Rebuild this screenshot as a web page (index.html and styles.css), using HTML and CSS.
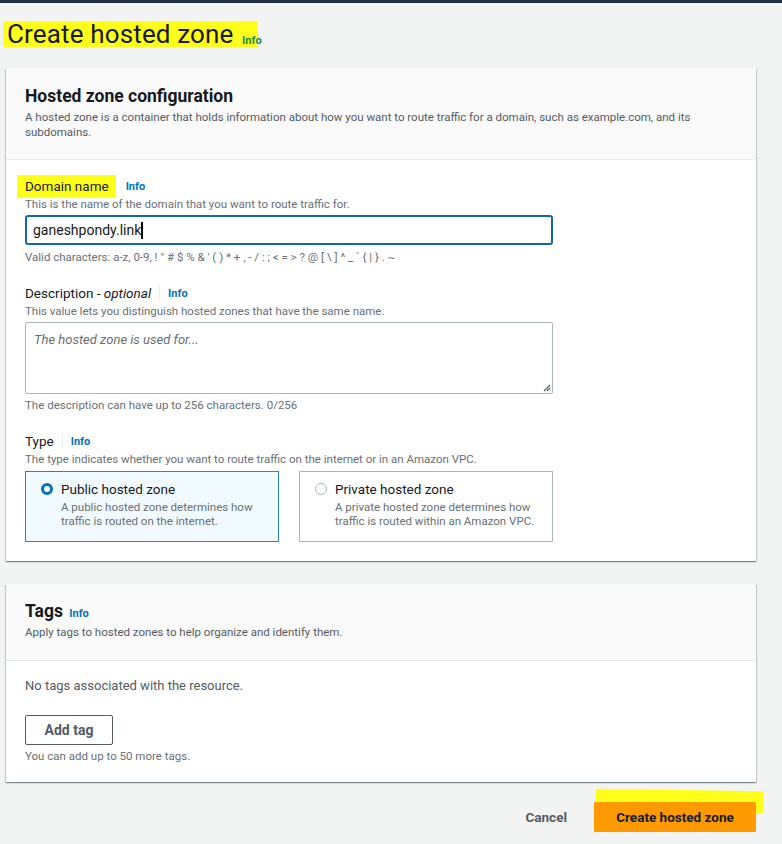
FILE: index.html
```html
<!DOCTYPE html>
<html lang="en">
<head>
<meta charset="utf-8">
<title>Create hosted zone</title>
<link rel="stylesheet" href="styles.css">
</head>
<body>
<div class="topbar"></div>
<main class="page">
  <h1 class="title"><span class="hl">Create hosted zone <a class="info info-title">Info</a></span></h1>

  <section class="card">
    <header class="card-head">
      <h2>Hosted zone configuration</h2>
      <p class="head-desc">A hosted zone is a container that holds information about how you want to route traffic for a domain, such as example.com, and its subdomains.</p>
    </header>
    <div class="card-body">
      <div class="form">
        <div class="field">
          <div class="label-row"><span class="label label-hl">Domain name</span><a class="info">Info</a></div>
          <div class="hint">This is the name of the domain that you want to route traffic for.</div>
          <div class="input focused"><span>ganeshpondy.link</span><span class="caret"></span></div>
          <div class="hint after">Valid characters: a-z, 0-9, ! " # $ % &amp; ' ( ) * + , - / : ; &lt; = &gt; ? @ [ \ ] ^ _ ` { | } . ~</div>
        </div>

        <div class="field spaced">
          <div class="label-row"><span class="label">Description - <i>optional</i></span><span class="divider"></span><a class="info">Info</a></div>
          <div class="hint">This value lets you distinguish hosted zones that have the same name.</div>
          <div class="textarea"><span class="placeholder">The hosted zone is used for...</span>
            <svg class="grip" width="10" height="10" viewBox="0 0 10 10"><path d="M9 3 L3 9 M9 6 L6 9" stroke="#545b64" stroke-width="1.2" fill="none"/></svg>
          </div>
          <div class="hint after2">The description can have up to 256 characters. 0/256</div>
        </div>

        <div class="field spaced">
          <div class="label-row"><span class="label">Type</span><span class="divider"></span><a class="info">Info</a></div>
          <div class="hint">The type indicates whether you want to route traffic on the internet or in an Amazon VPC.</div>
          <div class="radios">
            <div class="radio-card selected">
              <span class="radio on"></span>
              <div class="radio-text">
                <div class="radio-title">Public hosted zone</div>
                <div class="radio-desc">A public hosted zone determines how traffic is routed on the internet.</div>
              </div>
            </div>
            <div class="radio-card">
              <span class="radio"></span>
              <div class="radio-text">
                <div class="radio-title">Private hosted zone</div>
                <div class="radio-desc">A private hosted zone determines how traffic is routed within an Amazon VPC.</div>
              </div>
            </div>
          </div>
        </div>
      </div>
    </div>
  </section>

  <section class="card tags">
    <header class="card-head tags-head">
      <h2>Tags <a class="info info-h2">Info</a></h2>
      <p class="head-desc">Apply tags to hosted zones to help organize and identify them.</p>
    </header>
    <div class="card-body tags-body">
      <div class="empty">No tags associated with the resource.</div>
      <button class="btn-normal">Add tag</button>
      <div class="hint after2">You can add up to 50 more tags.</div>
    </div>
  </section>

  <div class="actions">
    <button class="btn-link">Cancel</button>
    <div class="primary-wrap">
      <span class="marker"></span>
      <button class="btn-primary">Create hosted zone</button>
    </div>
  </div>
</main>
</body>
</html>
```

FILE: styles.css
```css
* { box-sizing: border-box; }

body {
  margin: 0;
  background: #f2f3f3;
  font-family: Roboto, "Liberation Sans", Arial, sans-serif;
  color: #16191f;
}

.topbar {
  height: 3px;
  background: #232f3e;
}

.page {
  padding: 0 26px 0 6px;
}

.title {
  margin: 18px 0 0 -3px;
  height: 26px;
  font-size: 26px;
  font-weight: 400;
  line-height: 26px;
  letter-spacing: 0.15px;
}

.hl {
  display: inline-block;
  background: #ffff1a;
  padding: 0 0 0 4px;
  width: 255px;
  white-space: nowrap;
}

.info {
  color: #0073bb;
  font-weight: 700;
  font-size: 11px;
  line-height: 1;
  text-decoration: none;
  letter-spacing: 0;
}

.info-title {
  color: #1c8a3e;
  font-size: 11px;
  margin-left: 2px;
  vertical-align: -1px;
}

.card {
  margin-top: 21px;
  background: #fff;
  box-shadow: 0 1px 1px 0 rgba(0, 28, 36, 0.3), 1px 1px 1px 0 rgba(0, 28, 36, 0.15), -1px 1px 1px 0 rgba(0, 28, 36, 0.15);
}

.card-head {
  background: #fafafa;
  padding: 18px 19px 19px;
  border-bottom: 1px solid #eaeded;
}

.card-head h2 {
  margin: 0;
  font-size: 17.5px;
  line-height: 20px;
  height: 20px;
  font-weight: 700;
}

.head-desc {
  margin: 4px 0 0;
  font-size: 11.5px;
  line-height: 15px;
  color: #545b64;
}

.card-body {
  padding: 18px 19px 19px;
}

.form {
  width: 528px;
}

.label-row {
  display: flex;
  align-items: center;
  height: 16px;
}

.label {
  font-size: 13.5px;
  line-height: 16px;
}

.label-hl {
  background: #ffff1a;
  margin-left: -8px;
  padding: 3px 7px 4px 8px;
  margin-right: 10px;
}

.divider {
  width: 1px;
  height: 16px;
  background: #eaeded;
  margin: 0 8px 0 8px;
}

.hint {
  margin-top: 3px;
  font-size: 11.5px;
  line-height: 14px;
  color: #687078;
}

.hint.after { margin-top: 5px; }
.hint.after2 { margin-top: 4px; }

.input {
  margin-top: 4px;
  height: 30px;
  border: 2px solid #0f6aa8;
  border-radius: 3px;
  padding: 0 6px;
  display: flex;
  align-items: center;
  font-size: 14px;
  color: #16191f;
}

.caret {
  display: inline-block;
  width: 2px;
  height: 17px;
  background: #000;
}

.field.spaced { margin-top: 21px; }

.textarea {
  position: relative;
  margin-top: 4px;
  height: 72px;
  border: 1px solid #aab7b8;
  border-radius: 2px;
  padding: 6px 8px;
}

.placeholder {
  font-style: italic;
  font-size: 13px;
  color: #687078;
}

.grip {
  position: absolute;
  right: 1px;
  bottom: 1px;
}

.radios {
  margin-top: 5px;
  display: grid;
  grid-template-columns: 1fr 1fr;
  gap: 20px;
}

.radio-card {
  height: 71px;
  border: 1px solid #aab7b8;
  padding: 9px 15px 13px;
  display: flex;
  gap: 8px;
}

.radio-card.selected {
  background: #f1faff;
  border-color: #2b84c0;
}

.radio {
  flex: none;
  width: 12px;
  height: 12px;
  margin-top: 2px;
  border-radius: 50%;
  border: 1px solid #aab7b8;
  background: #fff;
}

.radio.on {
  border: 3.5px solid #0073bb;
}

.radio-title {
  font-size: 13.5px;
  line-height: 16px;
}

.radio-desc {
  margin-top: 3px;
  font-size: 11.5px;
  line-height: 14px;
  color: #687078;
}

.card.tags { margin-top: 23px; }

.tags-head { padding: 17px 19px 20px; }

.tags-body { padding: 17px 19px 19px; }

.info-h2 {
  font-size: 11px;
  margin-left: 2px;
}

.empty {
  font-size: 13px;
  line-height: 16px;
  color: #545b64;
}

.btn-normal {
  display: block;
  margin-top: 21px;
  height: 30px;
  width: 88px;
  background: #fff;
  border: 1px solid #545b64;
  border-radius: 2px;
  font-family: inherit;
  font-weight: 700;
  font-size: 14px;
  color: #545b64;
}

.actions {
  margin-top: 20px;
  display: flex;
  justify-content: flex-end;
  align-items: center;
  gap: 27px;
}

.btn-link {
  border: 0;
  background: none;
  padding: 0;
  font-family: inherit;
  font-weight: 700;
  font-size: 13.5px;
  color: #545b64;
}

.primary-wrap {
  position: relative;
}

.marker {
  position: absolute;
  left: 2px;
  top: -12px;
  width: 167px;
  height: 22px;
  background: #ffff1a;
  transform: rotate(0.9deg);
}

.btn-primary {
  position: relative;
  display: block;
  height: 30px;
  width: 162px;
  border: 0;
  border-radius: 1px;
  background: #ff9900;
  font-family: inherit;
  font-weight: 700;
  font-size: 13.5px;
  color: #16191f;
}
```
